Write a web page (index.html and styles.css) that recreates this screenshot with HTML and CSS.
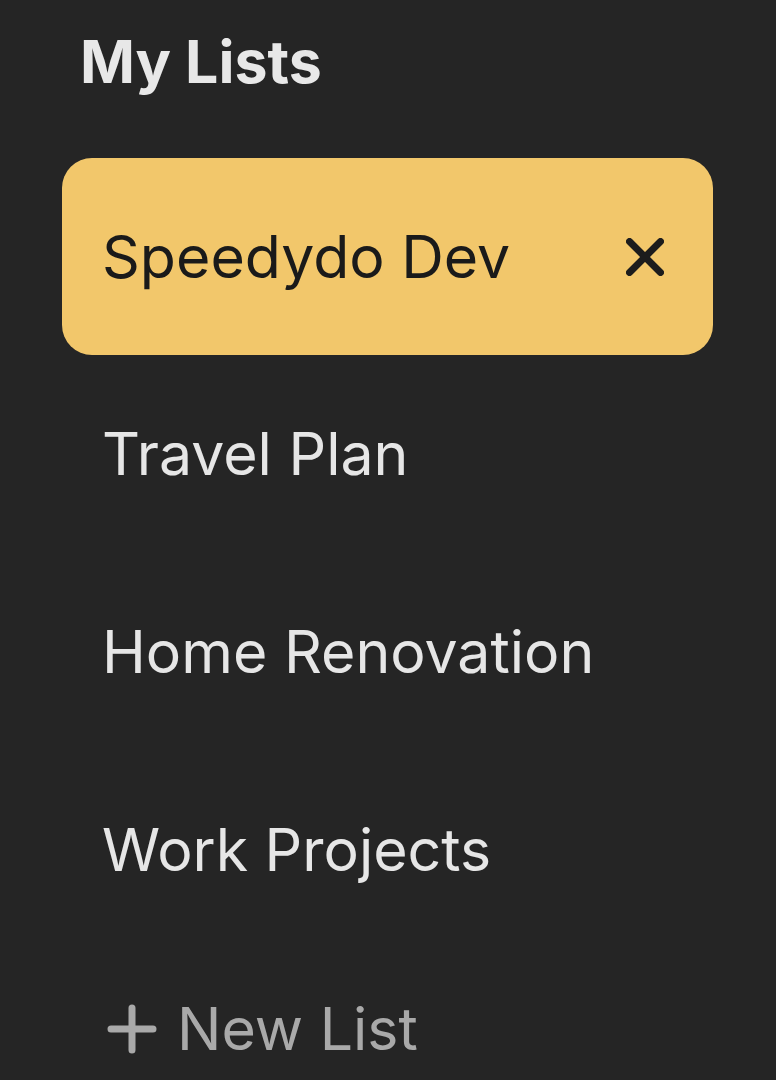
FILE: index.html
```html
<!DOCTYPE html>
<html lang="en">
<head>
<meta charset="utf-8">
<title>My Lists</title>
<link rel="stylesheet" href="styles.css">
</head>
<body>
<main class="panel">
  <h1 class="title">My Lists</h1>
  <ul class="lists">
    <li class="list-item active">
      <span class="list-name">Speedydo Dev</span>
      <button class="close-btn" aria-label="Delete list">
        <svg width="38" height="38" viewBox="0 0 38 38"><path d="M3.5 3.5 L34.5 34.5 M34.5 3.5 L3.5 34.5" stroke="#1c1c1c" stroke-width="7" stroke-linecap="round" fill="none"/></svg>
      </button>
    </li>
    <li class="list-item"><span class="list-name">Travel Plan</span></li>
    <li class="list-item"><span class="list-name">Home Renovation</span></li>
    <li class="list-item"><span class="list-name">Work Projects</span></li>
  </ul>
  <div class="new-list">
    <svg class="plus" width="50" height="50" viewBox="0 0 50 50"><path d="M25 4 V46 M4 25 H46" stroke="#a9a9a9" stroke-width="7" stroke-linecap="round" fill="none"/></svg>
    <span class="new-text">New List</span>
  </div>
</main>
</body>
</html>
```
FILE: styles.css
```css
html, body {
  margin: 0;
  padding: 0;
  background: #252525;
}
body {
  font-family: Inter, "Noto Sans", sans-serif;
  width: 776px;
  height: 1080px;
  overflow: hidden;
}
.panel {
  padding: 27px 63px 0 62px;
}
.title {
  margin: 0;
  padding-left: 18px;
  font-size: 59px;
  line-height: 70px;
  font-weight: 700;
  color: #e8e8e8;
}
.lists {
  list-style: none;
  margin: 61px 0 0 0;
  padding: 0;
}
.list-item {
  height: 198px;
  display: flex;
  align-items: center;
  justify-content: space-between;
  padding: 0 49px 0 40px;
  box-sizing: border-box;
  border-radius: 30px;
}
.list-item.active {
  background: #f2c76b;
  height: 197px;
}
.list-name {
  font-size: 59px;
  line-height: 70px;
  color: #e6e6e6;
}
.active .list-name {
  color: #1a1a1a;
}
.close-btn {
  border: 0;
  background: none;
  padding: 0;
  display: flex;
  width: 38px;
  height: 38px;
}
.new-list {
  display: flex;
  align-items: center;
  margin-top: 45px;
  padding-left: 45px;
  gap: 20px;
}
.new-text {
  font-size: 59px;
  line-height: 70px;
  color: #a9a9a9;
}
```
